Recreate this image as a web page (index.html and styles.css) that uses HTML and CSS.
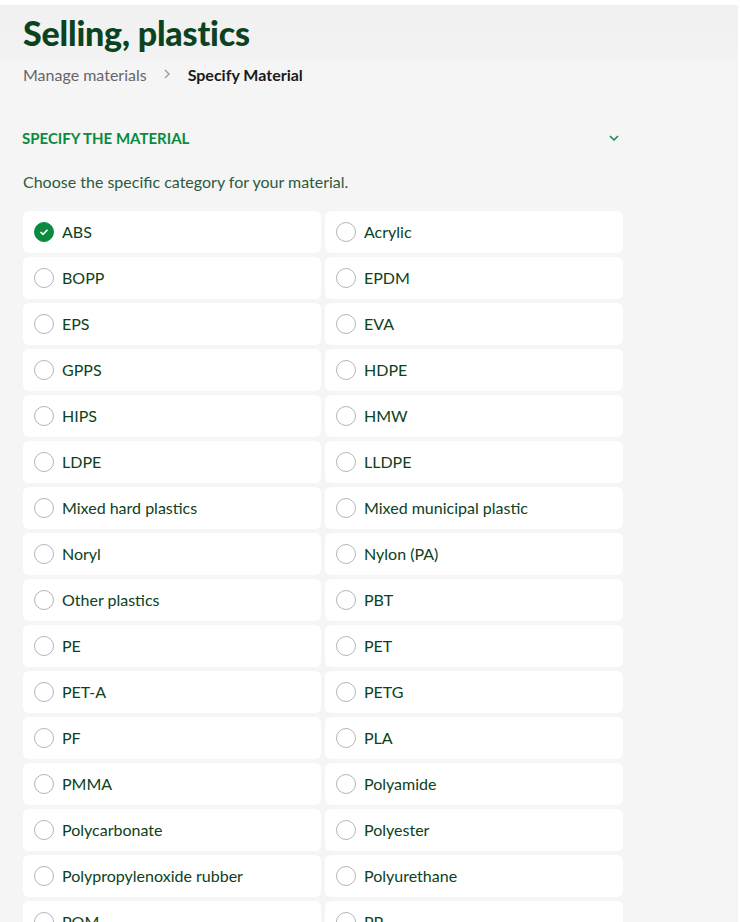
FILE: index.html
```html
<!DOCTYPE html>
<html>
<head>
<meta charset="utf-8">
<link rel="stylesheet" href="styles.css">
</head>
<body>
<div class="page">
  <header class="head">
    <h1 class="title">Selling, plastics</h1>
    <nav class="crumbs">
      <span class="crumb">Manage materials</span>
      <svg class="sep" width="10" height="12" viewBox="0 0 10 12"><path d="M3 2l4 4-4 4" fill="none" stroke="#999" stroke-width="1.3"/></svg>
      <span class="crumb current">Specify Material</span>
    </nav>
  </header>
  <main class="content">
    <div class="section-head">
      <span class="section-title">SPECIFY THE MATERIAL</span>
      <svg class="chev" width="12" height="8" viewBox="0 0 12 8"><path d="M2 2l4 4 4-4" fill="none" stroke="#0a8a3e" stroke-width="1.5"/></svg>
    </div>
    <p class="intro">Choose the specific category for your material.</p>
    <div class="grid">
      <label class="opt"><span class="radio checked"><svg width="10" height="8" viewBox="0 0 10 8"><path d="M1.5 4l2.5 2.3L8.5 1.8" fill="none" stroke="#fff" stroke-width="1.6"/></svg></span>ABS</label>
      <label class="opt"><span class="radio"></span>Acrylic</label>
      <label class="opt"><span class="radio"></span>BOPP</label>
      <label class="opt"><span class="radio"></span>EPDM</label>
      <label class="opt"><span class="radio"></span>EPS</label>
      <label class="opt"><span class="radio"></span>EVA</label>
      <label class="opt"><span class="radio"></span>GPPS</label>
      <label class="opt"><span class="radio"></span>HDPE</label>
      <label class="opt"><span class="radio"></span>HIPS</label>
      <label class="opt"><span class="radio"></span>HMW</label>
      <label class="opt"><span class="radio"></span>LDPE</label>
      <label class="opt"><span class="radio"></span>LLDPE</label>
      <label class="opt"><span class="radio"></span>Mixed hard plastics</label>
      <label class="opt"><span class="radio"></span>Mixed municipal plastic</label>
      <label class="opt"><span class="radio"></span>Noryl</label>
      <label class="opt"><span class="radio"></span>Nylon (PA)</label>
      <label class="opt"><span class="radio"></span>Other plastics</label>
      <label class="opt"><span class="radio"></span>PBT</label>
      <label class="opt"><span class="radio"></span>PE</label>
      <label class="opt"><span class="radio"></span>PET</label>
      <label class="opt"><span class="radio"></span>PET-A</label>
      <label class="opt"><span class="radio"></span>PETG</label>
      <label class="opt"><span class="radio"></span>PF</label>
      <label class="opt"><span class="radio"></span>PLA</label>
      <label class="opt"><span class="radio"></span>PMMA</label>
      <label class="opt"><span class="radio"></span>Polyamide</label>
      <label class="opt"><span class="radio"></span>Polycarbonate</label>
      <label class="opt"><span class="radio"></span>Polyester</label>
      <label class="opt"><span class="radio"></span>Polypropylenoxide rubber</label>
      <label class="opt"><span class="radio"></span>Polyurethane</label>
      <label class="opt"><span class="radio"></span>POM</label>
      <label class="opt"><span class="radio"></span>PP</label>
      <label class="opt"><span class="radio"></span>PS</label>
      <label class="opt"><span class="radio"></span>PVC</label>
    </div>
  </main>
</div>
</body>
</html>
```

FILE: styles.css
```css
html, body {
  margin: 0;
  padding: 0;
  background: #fff;
}
body {
  font-family: Lato, "Open Sans", sans-serif;
  color: #0b4220;
  overflow: hidden;
}
.page {
  margin-top: 5px;
  margin-right: 2px;
  background: #f5f5f5;
  min-height: 917px;
}
.head {
  background: linear-gradient(#f1f1f1 0, #f2f2f2 52px, #f5f5f5 60px);
  padding: 10px 23px 0 23px;
}
.title {
  margin: 0;
  font-size: 34px;
  line-height: 36px;
  font-weight: 900;
  color: #0b4220;
  letter-spacing: -0.2px;
}
.crumbs {
  display: flex;
  align-items: center;
  height: 20px;
  margin-top: 13px;
  font-size: 16px;
}
.crumb {
  color: #666;
}
.sep {
  margin: 0 16px 0 15px;
}
.crumb.current {
  color: #1a1a1a;
  font-weight: 700;
}
.content {
  padding: 0 23px 0 23px;
  width: 600px;
}
.section-head {
  display: flex;
  align-items: center;
  justify-content: space-between;
  margin-top: 44px;
  margin-left: -1px;
  padding-right: 3px;
  height: 20px;
}
.section-title {
  font-size: 15px;
  font-weight: 700;
  color: #0a8a3e;
}
.intro {
  margin: 24px 0 0 0;
  font-size: 16px;
  line-height: 20px;
  color: #2d5a3e;
}
.grid {
  margin-top: 19px;
  display: grid;
  grid-template-columns: 298px 298px;
  column-gap: 4px;
  row-gap: 4px;
}
.opt {
  display: flex;
  align-items: center;
  height: 42px;
  background: #fff;
  border-radius: 6px;
  padding-left: 11px;
  padding-bottom: 1px;
  box-sizing: border-box;
  font-size: 16px;
  color: #0b4220;
}
.radio {
  width: 18px;
  height: 18px;
  border: 1.5px solid #b5b5b5;
  border-radius: 50%;
  margin-right: 8px;
  margin-top: 1px;
  flex-shrink: 0;
  display: flex;
  align-items: center;
  justify-content: center;
}
.radio.checked {
  background: #0a8a3e;
  border-color: #0a8a3e;
}
```
